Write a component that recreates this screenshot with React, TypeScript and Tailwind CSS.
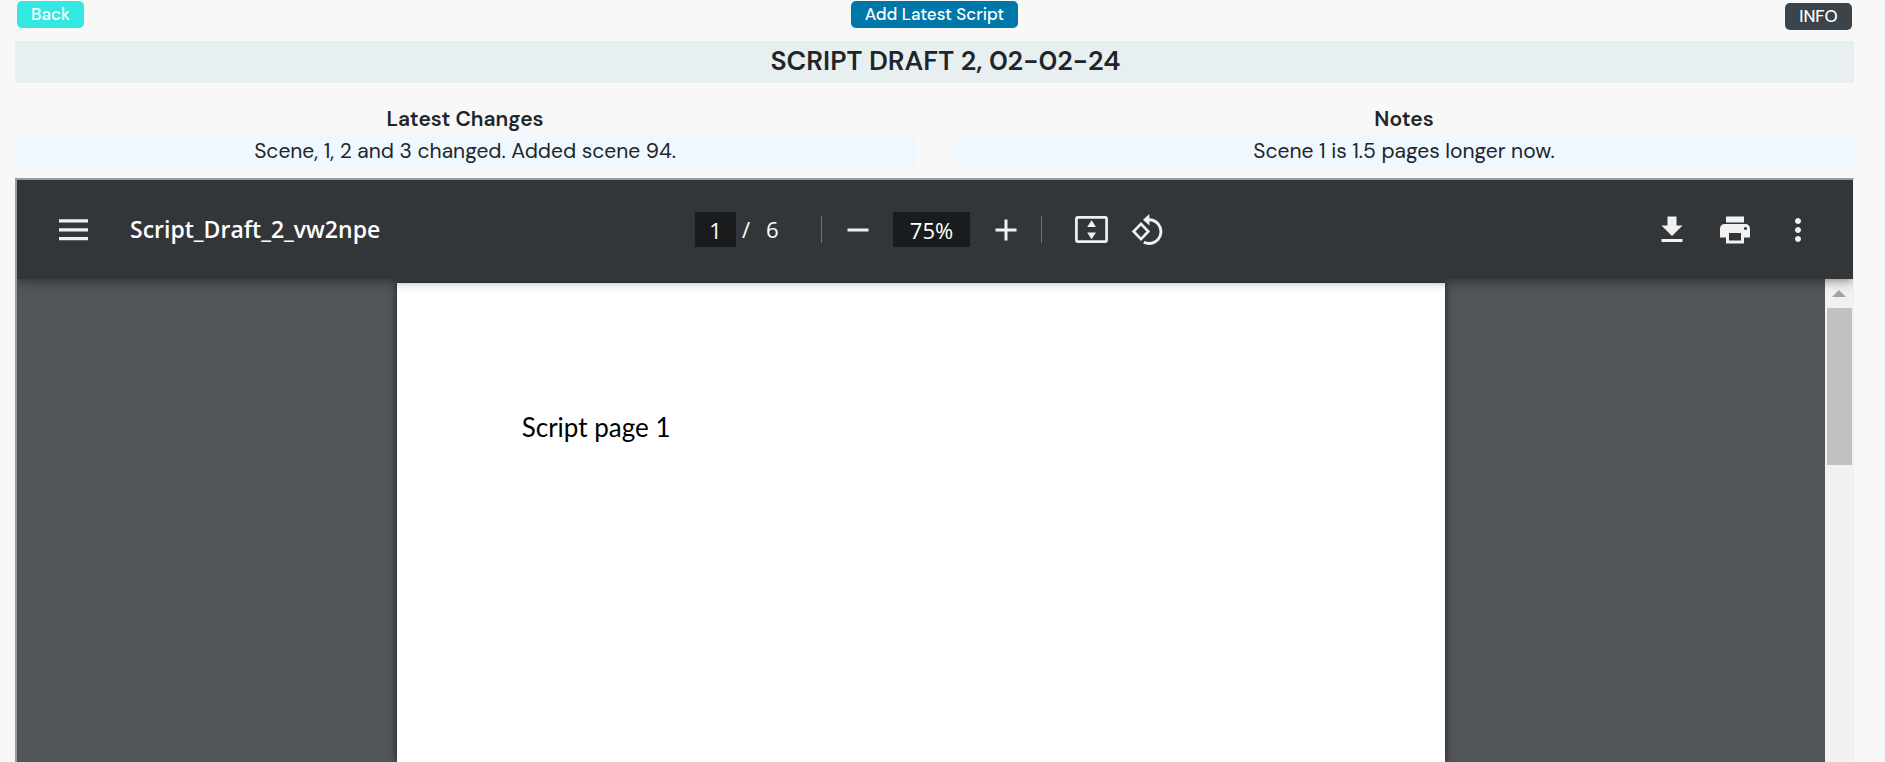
import React from "react";
import { MdAdd, MdMoreVert, MdPrint, MdRemove } from "react-icons/md";

function MenuIcon() {
  return (
    <svg width="29" height="22" viewBox="0 0 29 22" fill="currentColor" aria-hidden="true">
      <path d="M0 .2h29v3.2H0zM0 9.2h29v3.2H0zM0 18h29v3.2H0z" />
    </svg>
  );
}

function FitIcon() {
  return (
    <svg width="33" height="27" viewBox="0 0 33 27" aria-hidden="true">
      <rect x="1.4" y="1.4" width="30.2" height="24.2" rx="1.6" fill="none" stroke="currentColor" strokeWidth="2.7" />
      <path d="M16.6 4.3 21 11h-8.8zM16.6 23.3 21 16.6h-8.8z" fill="currentColor" />
    </svg>
  );
}

function RotateIcon() {
  return (
    <svg width="32" height="32" viewBox="0 0 32 32" aria-hidden="true">
      <path d="M2.6 17.5 10 9.9 17.3 17.5 10 25.1z" fill="none" stroke="currentColor" strokeWidth="2.7" />
      <path d="M18 5.7A11.9 11.9 0 1 1 12.8 28.3" fill="none" stroke="currentColor" strokeWidth="2.9" />
      <path d="M18.4 0v11.4L12 5.7z" fill="currentColor" />
    </svg>
  );
}

function DownloadIcon() {
  return (
    <svg width="36" height="36" viewBox="0 0 24 24" fill="currentColor" aria-hidden="true">
      <path d="M19 9h-4V3H9v6H5l7 7 7-7zM5 18v2h14v-2H5z" />
    </svg>
  );
}

function Toolbar() {
  return (
    <div className="relative z-10 grid h-[99px] shrink-0 grid-cols-[1fr_auto_1fr] items-center bg-[#323639] font-['Open_Sans',sans-serif] text-[22px] text-[#f1f1f1] shadow-[0_2px_10px_rgba(0,0,0,0.45)]">
      <div className="flex items-center gap-[42px] pl-[42px]">
        <button type="button" aria-label="Menu"><MenuIcon /></button>
        <span className="text-[23px] font-semibold text-white">Script_Draft_2_vw2npe</span>
      </div>
      <div className="flex items-center pr-3 text-white">
        <input aria-label="Page number" defaultValue="1" className="h-[35px] w-[41px] bg-[#191b1c] text-center outline-none" />
        <span className="flex w-[85px] gap-4 pl-1.5"><span>/</span><span>6</span></span>
        <span className="h-[27px] w-px bg-[#6f7274]" />
        <button type="button" aria-label="Zoom out" className="flex w-[71px] justify-center text-[#f1f1f1]"><MdRemove size={36} /></button>
        <input aria-label="Zoom level" defaultValue="75%" className="h-[35px] w-[77px] bg-[#191b1c] text-center outline-none" />
        <button type="button" aria-label="Zoom in" className="flex w-[71px] justify-center text-[#f1f1f1]"><MdAdd size={36} /></button>
        <span className="h-[27px] w-px bg-[#6f7274]" />
        <div className="flex items-center gap-[23px] pl-[33px] text-[#f1f1f1]">
          <button type="button" aria-label="Fit to page"><FitIcon /></button>
          <button type="button" aria-label="Rotate counterclockwise"><RotateIcon /></button>
        </div>
      </div>
      <div className="flex items-center justify-end gap-[27px] pr-[37px]">
        <button type="button" aria-label="Download"><DownloadIcon /></button>
        <button type="button" aria-label="Print"><MdPrint size={36} /></button>
        <button type="button" aria-label="More actions"><MdMoreVert size={36} /></button>
      </div>
    </div>
  );
}

function Viewer() {
  return (
    <section aria-label="Script document" className="mt-2.5 flex min-h-0 flex-1 flex-col overflow-hidden border-t-2 border-r border-l-2 border-t-[#9a9a9a] border-r-[#eeeeee] border-l-[#9a9a9a]">
      <Toolbar />
      <div className="flex min-h-0 flex-1 overflow-hidden bg-[#525659]">
        <div className="flex flex-1 justify-center overflow-hidden pt-1">
          <article className="w-[58%] bg-white px-[125px] pt-[124px] font-[Lato,sans-serif] text-[26px] leading-10 text-black shadow-[0_0_8px_rgba(0,0,0,0.7)]">
            <p>Script page 1</p>
          </article>
        </div>
        <div aria-hidden="true" className="flex w-7 flex-col items-center bg-[#f1f1f1]">
          <div className="flex h-[29px] items-center justify-center">
            <svg width="14" height="7" viewBox="0 0 14 7" fill="#a3a3a3"><path d="M7 0l7 7H0z" /></svg>
          </div>
          <div className="h-[157px] w-[25px] bg-[#c1c1c1]" />
        </div>
      </div>
    </section>
  );
}

function Remark({ title, text }: { title: string; text: string }) {
  return (
    <section className="text-center text-[21px] leading-[30px]">
      <h2 className="pb-0.5 font-semibold">{title}</h2>
      <p className="bg-[#eff7ff] pb-0.5">{text}</p>
    </section>
  );
}

export default function App() {
  return (
    <main className="flex h-screen flex-col overflow-hidden bg-[#f8f8f8] pr-[31px] pl-[15px] font-['DM_Sans',Inter,sans-serif] text-[#212529]">
      <div className="grid grid-cols-3 items-start px-0.5 pt-px text-[17px] leading-[27px] font-medium text-white">
        <button type="button" className="w-[67px] justify-self-start rounded-[5px] bg-[#34e8e2]">Back</button>
        <button type="button" className="w-[167px] justify-self-center rounded-[5px] bg-[#0077a9]">Add Latest Script</button>
        <button type="button" className="mt-0.5 w-[67px] justify-self-end rounded-[5px] bg-[#3b444b]">INFO</button>
      </div>
      <h1 className="mt-[11px] bg-[#e8eff1] pb-0.5 pl-[22px] text-center text-[27px] leading-10 font-semibold">SCRIPT DRAFT 2, 02-02-24</h1>
      <div className="mt-[21px] grid grid-cols-2 gap-[39px]">
        <Remark title="Latest Changes" text="Scene, 1, 2 and 3 changed. Added scene 94." />
        <Remark title="Notes" text="Scene 1 is 1.5 pages longer now." />
      </div>
      <Viewer />
    </main>
  );
}
